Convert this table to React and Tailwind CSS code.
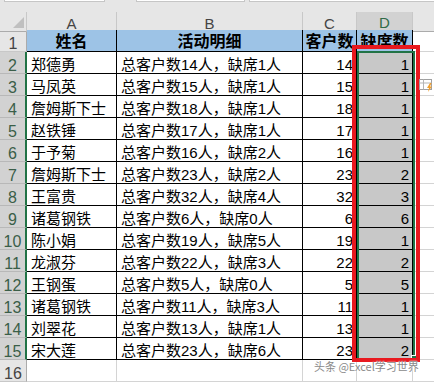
import React from "react";

const rows = [
  ["郑德勇", "总客户数14人，缺席1人", 14, 1],
  ["马凤英", "总客户数15人，缺席1人", 15, 1],
  ["詹姆斯下士", "总客户数18人，缺席1人", 18, 1],
  ["赵铁锤", "总客户数17人，缺席1人", 17, 1],
  ["于予菊", "总客户数16人，缺席2人", 16, 1],
  ["詹姆斯下士", "总客户数23人，缺席2人", 23, 2],
  ["王富贵", "总客户数32人，缺席4人", 32, 3],
  ["诸葛钢铁", "总客户数6人，缺席0人", 6, 6],
  ["陈小娟", "总客户数19人，缺席5人", 19, 1],
  ["龙淑芬", "总客户数22人，缺席3人", 22, 2],
  ["王钢蛋", "总客户数5人，缺席0人", 5, 5],
  ["诸葛钢铁", "总客户数11人，缺席3人", 11, 1],
  ["刘翠花", "总客户数13人，缺席1人", 13, 1],
  ["宋大莲", "总客户数23人，缺席6人", 23, 2],
];

const cols = "grid grid-cols-[27px_90px_186px_54px_56px_1fr]";

function RowHead({ n, selected }) {
  return (
    <div
      className={
        selected
          ? "flex items-center justify-center pt-[6px] leading-none bg-[#d2d2d2] border-r-2 border-r-[#217346] border-b border-b-[#b8b8b8] text-[16px] text-[#3a5e48]"
          : "flex items-center justify-center pt-[6px] leading-none bg-[#e6e6e6] border-r border-r-[#ababab] border-b border-b-[#c8c8c8] text-[16px] text-[#444]"
      }
    >
      {n}
    </div>
  );
}

function QuickIcon() {
  return (
    <svg width="16" height="16" viewBox="0 0 16 16">
      <rect x="1.5" y="2.5" width="12" height="10" fill="#fff" stroke="#a0a0a0" />
      <line x1="1.5" y1="6" x2="13.5" y2="6" stroke="#b5b5b5" />
      <line x1="5.5" y1="2.5" x2="5.5" y2="12.5" stroke="#b5b5b5" />
      <polygon points="12,6 9,11 11,11 10,15 14,9.5 12,9.5 13.5,6" fill="#f0a030" />
    </svg>
  );
}

export default function App() {
  return (
    <div className="relative w-[434px] h-[383px] overflow-hidden bg-white font-['Liberation_Sans','Noto_Sans_CJK_SC',sans-serif] text-black">
      {/* formula bar remnant */}
      <div className="h-[12px] bg-[#e6e6e6] flex items-start">
        <div className="ml-[4px] w-[101px] h-[2px] bg-white border-x border-b border-[#c6c6c6]" />
        <div className="ml-[31px] w-[109px] h-[2px] bg-white border-x border-b border-[#c6c6c6]" />
        <div className="ml-[4px] flex-1 h-[2px] bg-white border-l border-b border-[#c6c6c6]" />
      </div>

      {/* column headers */}
      <div className={`${cols} h-[18px] text-[15px] leading-none text-[#444]`}>
        <div className="relative bg-[#e6e6e6] border-r border-r-[#c8c8c8] border-b border-b-[#ababab]">
          <div className="absolute left-[13px] top-[5px] w-0 h-0 border-l-[11px] border-l-transparent border-b-[11px] border-b-[#c0c0c0]" />
        </div>
        <div className="flex items-center justify-center pt-[3px] bg-[#e6e6e6] border-r border-r-[#c8c8c8] border-b border-b-[#ababab]">A</div>
        <div className="flex items-center justify-center pt-[3px] bg-[#e6e6e6] border-r border-r-[#c8c8c8] border-b border-b-[#ababab]">B</div>
        <div className="flex items-center justify-center pt-[3px] bg-[#e6e6e6] border-r border-r-[#c8c8c8] border-b border-b-[#ababab]">C</div>
        <div className="flex items-center justify-center pt-[3px] bg-[#d2d2d2] border-r border-r-[#c8c8c8] border-b-2 border-b-[#217346] text-[#2f6b47]">D</div>
        <div className="bg-[#e6e6e6] border-b border-b-[#ababab]" />
      </div>

      {/* sheet body */}
      <div className={`${cols} auto-rows-[22px] text-[15px] leading-none`}>
        <RowHead n={1} />
        <div className="flex items-center justify-center pt-[3px] bg-[#9dc3e6] border-r border-b border-black font-bold text-[16px]">姓名</div>
        <div className="flex items-center justify-center pt-[3px] bg-[#9dc3e6] border-r border-b border-black font-bold text-[16px]">活动明细</div>
        <div className="flex items-center justify-center pt-[3px] bg-[#9dc3e6] border-r border-b border-black font-bold text-[16px] whitespace-nowrap overflow-hidden">客户数</div>
        <div className="flex items-center justify-center pt-[3px] bg-[#9dc3e6] border-r border-b border-black font-bold text-[16px] whitespace-nowrap overflow-hidden">缺席数</div>
        <div className="border-b border-[#d4d4d4]" />

        {rows.map(([name, detail, total, absent], i) => (
          <React.Fragment key={i}>
            <RowHead n={i + 2} selected />
            <div className="flex items-center pl-[4px] pt-[3px] border-r border-b border-black whitespace-nowrap overflow-hidden">{name}</div>
            <div className="flex items-center pl-[4px] pt-[3px] border-r border-b border-black whitespace-nowrap overflow-hidden">{detail}</div>
            <div className="flex items-center justify-end pr-[3px] pt-[3px] border-r border-b border-black">{total}</div>
            <div className="flex items-center justify-end pr-[3px] pt-[3px] bg-[#c8c8c8] border-r border-b border-black">{absent}</div>
            <div className="border-b border-[#d4d4d4]" />
          </React.Fragment>
        ))}

        <RowHead n={16} />
        <div className="border-r border-b border-[#d4d4d4]" />
        <div className="border-r border-b border-[#d4d4d4]" />
        <div className="border-r border-b border-[#d4d4d4]" />
        <div className="border-r border-b border-[#d4d4d4]" />
        <div className="border-b border-[#d4d4d4]" />
      </div>

      {/* selection outline D2:D15 */}
      <div className="absolute left-[357px] top-[51px] w-[58px] h-[310px] border-2 border-[#217346]" />
      <div className="absolute left-[411px] top-[355px] w-[6px] h-[6px] bg-[#217346] border border-white" />

      {/* red highlight box */}
      <div className="absolute left-[352px] top-[45px] w-[68px] h-[317px] border-[4px] border-[#e8191f]" />

      {/* quick analysis button */}
      <div className="absolute left-[418px] top-[77px]">
        <QuickIcon />
      </div>

      {/* watermark */}
      <div className="absolute left-[314px] top-[361px] text-[11px] leading-none text-[#8a8a8a] whitespace-nowrap [text-shadow:0_0_2px_#fff,0_0_1px_#fff] font-['Noto_Sans_CJK_SC',sans-serif]">
        头条 @Excel学习世界
      </div>
    </div>
  );
}
